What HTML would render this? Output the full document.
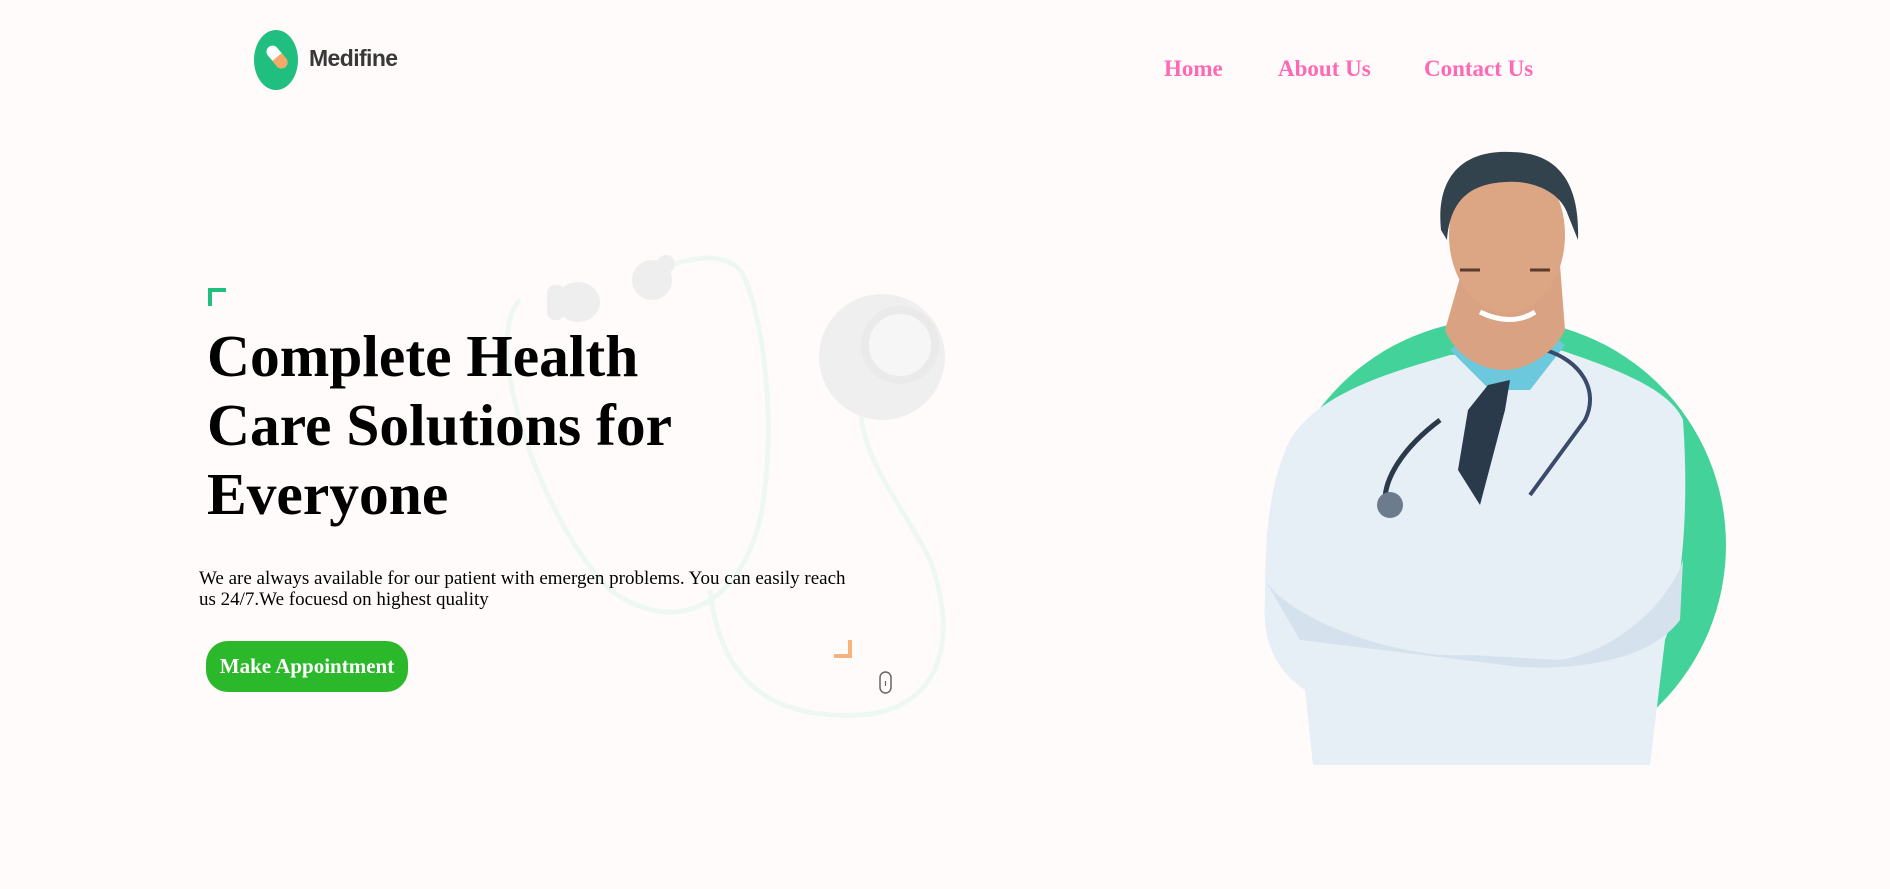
<!DOCTYPE html>
<html><head><meta charset="utf-8"><style>
html,body{margin:0;padding:0;width:1890px;height:889px;overflow:hidden;background:#fffbfa;font-family:"Liberation Serif",serif;position:relative}
.abs{position:absolute}
.nav a{position:absolute;top:56px;color:#ff69b4;font-weight:bold;font-size:23px;text-decoration:none;white-space:nowrap}
h1{position:absolute;left:207px;top:322px;margin:0;font-size:59.5px;line-height:69px;font-weight:bold;color:#000;width:540px}
p{position:absolute;left:199px;top:568px;margin:0;font-size:19px;line-height:21px;width:664px;color:#000}
.btn{position:absolute;left:206px;top:641px;width:202px;height:51px;border-radius:22px;background:#2bb92b;color:#fff;font-weight:bold;font-size:21px;line-height:51px;text-align:center}
</style></head><body>
<svg class="abs" style="left:0;top:0" width="1890" height="889">
 <g fill="none" stroke="#eef8f3" stroke-width="5">
  <path d="M520 300 C480 340 540 520 610 590 C680 640 740 600 760 520 C780 420 760 300 740 270 C720 250 690 260 670 265"/>
  <path d="M710 590 C720 680 770 720 860 715 C940 710 960 640 930 560 C900 500 860 460 860 400"/>
 </g>
 <circle cx="882" cy="357" r="63" fill="#f0efef"/>
 <circle cx="900" cy="345" r="35" fill="#f7f6f6" stroke="#ebeaea" stroke-width="8"/>
 <ellipse cx="578" cy="302" rx="22" ry="20" fill="#efeeee"/>
 <rect x="547" y="285" width="18" height="35" rx="8" fill="#efeeee"/>
 <circle cx="652" cy="280" r="20" fill="#efeeee"/>
 <circle cx="666" cy="264" r="9" fill="#efeeee"/>
 <ellipse cx="276" cy="60" rx="22" ry="30" fill="#21bf7f"/>
 <g transform="rotate(-40 277 57)">
  <rect x="271" y="44" width="12" height="26" rx="6" fill="#fff"/>
  <path d="M271 57 h12 v7 a6 6 0 0 1 -12 0 z" fill="#f6a868"/>
 </g>
 <path d="M210 306 V290 H226" stroke="#21bf7f" stroke-width="4" fill="none"/>
 <path d="M834 656 H850 V640" stroke="#f6b37c" stroke-width="4" fill="none"/>
 <rect x="880" y="672" width="11" height="21" rx="5.5" fill="none" stroke="#666" stroke-width="1.5"/>
 <line x1="885.5" y1="681" x2="885.5" y2="686" stroke="#666" stroke-width="1.2"/>
 <clipPath id="cp"><rect x="0" y="0" width="1890" height="765"/></clipPath>
 <circle cx="1500" cy="545" r="226" fill="#43d39a" clip-path="url(#cp)"/>
 <path d="M1290 440 C1320 390 1400 370 1450 355 L1560 350 C1620 370 1670 390 1683 420 C1690 520 1680 600 1665 640 L1650 765 L1313 765 L1305 690 C1275 670 1262 640 1265 600 C1265 530 1270 480 1290 440Z" fill="#e6eef6"/>
 <path d="M1265 580 C1290 620 1400 660 1470 655 L1560 660 C1620 650 1670 600 1683 560 L1680 620 C1650 660 1580 670 1520 667 L1300 640Z" fill="#d5e2ee"/>
 <path d="M1450 350 L1490 390 L1530 390 L1565 345 L1545 330 L1470 335Z" fill="#6cc8dc"/>
 <path d="M1488 385 L1510 380 L1505 410 L1480 505 L1458 470 L1468 410Z" fill="#2b3a4a"/>
 <path d="M1440 420 C1400 450 1385 480 1385 500" stroke="#2b3a4a" stroke-width="5" fill="none"/>
 <circle cx="1390" cy="505" r="13" fill="#6c7c8c"/>
 <path d="M1545 350 C1580 360 1600 390 1585 420 L1530 495" stroke="#3a4a6a" stroke-width="4" fill="none"/>
 <path d="M1465 260 L1560 265 L1565 330 C1550 360 1520 370 1505 370 C1480 370 1455 355 1445 330Z" fill="#d9a283"/>
 <ellipse cx="1507" cy="235" rx="58" ry="78" fill="#dca583"/>
 <path d="M1441 230 C1435 170 1470 150 1510 152 C1560 152 1580 185 1578 240 L1568 215 C1560 190 1530 180 1505 182 C1470 184 1450 200 1447 240Z" fill="#33434e"/>
 <path d="M1480 312 C1500 322 1520 322 1535 312" stroke="#fff" stroke-width="5" fill="none"/>
 <path d="M1460 270 h20 M1530 270 h20" stroke="#5a3a2a" stroke-width="3"/>
</svg>
<div class="abs" style="left:309px;top:45px;font-family:'Liberation Sans',sans-serif;font-weight:bold;font-size:23px;color:#383838;letter-spacing:-0.6px">Medifine</div>
<div class="nav">
 <a style="left:1164px">Home</a>
 <a style="left:1278px">About Us</a>
 <a style="left:1424px">Contact Us</a>
</div>
<h1>Complete Health Care Solutions for Everyone</h1>
<p>We are always available for our patient with emergen problems. You can easily reach us 24/7.We focuesd on highest quality</p>
<div class="btn">Make Appointment</div>
</body></html>
